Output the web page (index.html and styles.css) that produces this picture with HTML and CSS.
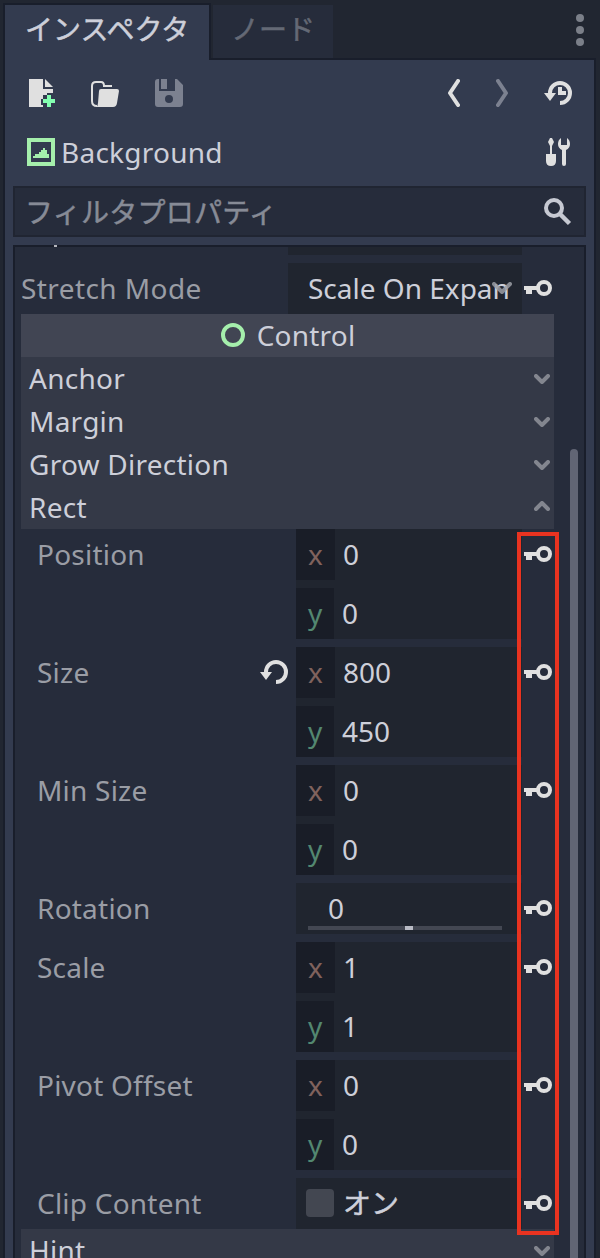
FILE: index.html
```html
<!DOCTYPE html>
<html lang="ja">
<head>
<meta charset="utf-8">
<title>インスペクタ</title>
<link rel="stylesheet" href="styles.css">
</head>
<body>
<svg class="defs" aria-hidden="true">
  <symbol id="key" viewBox="0 0 28 16"><path d="M0 6h13v4H8v4H2v-4H0z" fill="#e0e0e0"/><circle cx="20" cy="8" r="6" fill="none" stroke="#e0e0e0" stroke-width="4"/></symbol>
  <symbol id="down" viewBox="0 0 16 10"><path d="M2 2l6 6 6-6" fill="none" stroke="currentColor" stroke-width="4" stroke-linecap="round" stroke-linejoin="round"/></symbol>
  <symbol id="up" viewBox="0 0 16 10"><path d="M2 8l6-6 6 6" fill="none" stroke="currentColor" stroke-width="4" stroke-linecap="round" stroke-linejoin="round"/></symbol>
</svg>
<div class="dock">
  <header class="tabs">
    <div class="tab active">インスペクタ</div>
    <div class="tab">ノード</div>
    <svg class="dots" viewBox="0 0 8 32"><circle cx="4" cy="4" r="4"/><circle cx="4" cy="16" r="4"/><circle cx="4" cy="28" r="4"/></svg>
  </header>
  <main class="panel">
    <div class="toolbar">
      <svg class="icon" viewBox="0 0 28 28"><path d="M2 0h14v10h10v4h-6v2h-4v4h-2v6h2v2H2z" fill="#e0e0e0"/><path d="M18 0l8 8h-8z" fill="#e0e0e0"/><path d="M20 16h4v4h4v4h-4v4h-4v-4h-4v-4h4z" fill="#84ffb1"/></svg>
      <svg class="icon" viewBox="0 0 28 28"><path d="M6 27Q1 27 1 22V7Q1 3 5 3h5q3 0 3 4h8" fill="none" stroke="#e0e0e0" stroke-width="2"/><path d="M10 10h16q2 0 2 2l-2 12q-.5 4-4 4H5q2-1 2-4l1-12q0-2 2-2z" fill="#e0e0e0"/></svg>
      <svg class="icon" viewBox="0 0 28 28"><path fill-rule="evenodd" d="M3 0h1v12h16V0h2l6 6v19q0 3-3 3H3q-3 0-3-3V3Q0 0 3 0zM14 16a4 4 0 1 0 0 8a4 4 0 0 0 0-8z" fill="#7c8190"/><path d="M6 0h6v10H6z" fill="#7c8190"/></svg>
      <span class="spacer"></span>
      <svg class="arrow" viewBox="0 0 12 28"><path d="M10 2L2 14l8 12" fill="none" stroke="#e0e0e0" stroke-width="4" stroke-linecap="round" stroke-linejoin="round"/></svg>
      <svg class="arrow" viewBox="0 0 12 28"><path d="M2 2l8 12-8 12" fill="none" stroke="#7c8190" stroke-width="4" stroke-linecap="round" stroke-linejoin="round"/></svg>
      <svg class="icon" viewBox="0 0 28 28"><path d="M6 14a10 10 0 1 1 10 10" fill="none" stroke="#e0e0e0" stroke-width="4"/><path d="M0 14h12L6 22zM14 8h4v4h4v4h-8z" fill="#e0e0e0"/></svg>
    </div>
    <div class="object">
      <svg class="icon" viewBox="0 0 28 28"><path d="M2 2h24v24H2z" fill="none" stroke="#a5efac" stroke-width="4"/><path d="M6 20v-2h2v-2h4v-2h2v-2h2v-2h2v2h2v4h2v4z" fill="#a5efac"/></svg>
      <span class="name">Background</span>
      <svg class="icon" viewBox="0 0 28 28"><path d="M6 0h2l2 4-2 4v8h4v7q0 5-5 5t-5-5v-7h4V8L4 4zM17 0v7h6V0q3 2 3 6t-4 6v14q0 2-2 2t-2-2V12q-4-2-4-6t3-6z" fill="#e0e0e0"/></svg>
    </div>
    <div class="filter">
      <span>フィルタプロパティ</span>
      <svg class="icon" viewBox="0 0 28 28"><circle cx="10" cy="10" r="8" fill="none" stroke="#c6c9d2" stroke-width="4"/><path d="M15 15l10.5 10.5" stroke="#c6c9d2" stroke-width="4.5"/></svg>
    </div>
    <section class="inspector">
      <div class="list">
        <div class="cut"><i></i></div>
        <div class="row stretch"><span class="label">Stretch Mode</span><div class="field select"><span>Scale On Expan</span><svg class="chev" viewBox="0 0 20 12"><path d="M2 2l8 8 8-8" fill="none" stroke="currentColor" stroke-width="4" stroke-linecap="round" stroke-linejoin="round"/></svg></div><svg class="key"><use href="#key"/></svg></div>
        <div class="category"><svg viewBox="0 0 24 24"><circle cx="12" cy="12" r="10" fill="none" stroke="#a5efac" stroke-width="4"/></svg><span>Control</span></div>
        <div class="section"><span>Anchor</span><svg><use href="#down"/></svg></div>
        <div class="section"><span>Margin</span><svg><use href="#down"/></svg></div>
        <div class="section"><span>Grow Direction</span><svg><use href="#down"/></svg></div>
        <div class="section open"><span>Rect</span><svg><use href="#up"/></svg></div>
        <div class="props">
          <div class="row"><span class="label">Position</span><div class="field vector"><div><em class="x">x</em><span>0</span></div><div><em class="y">y</em><span>0</span></div></div><svg class="key"><use href="#key"/></svg></div>
          <div class="row"><span class="label">Size</span><svg class="reset" viewBox="0 0 28 24"><path d="M6 12a10 10 0 1 1 10 10" fill="none" stroke="#e0e0e0" stroke-width="4"/><path d="M0 12h12L6 20z" fill="#e0e0e0"/></svg><div class="field vector"><div><em class="x">x</em><span>800</span></div><div><em class="y">y</em><span>450</span></div></div><svg class="key"><use href="#key"/></svg></div>
          <div class="row"><span class="label">Min Size</span><div class="field vector"><div><em class="x">x</em><span>0</span></div><div><em class="y">y</em><span>0</span></div></div><svg class="key"><use href="#key"/></svg></div>
          <div class="row"><span class="label">Rotation</span><div class="field slider"><span>0</span><div class="track"><i></i></div></div><svg class="key"><use href="#key"/></svg></div>
          <div class="row"><span class="label">Scale</span><div class="field vector"><div><em class="x">x</em><span>1</span></div><div><em class="y">y</em><span>1</span></div></div><svg class="key"><use href="#key"/></svg></div>
          <div class="row"><span class="label">Pivot Offset</span><div class="field vector"><div><em class="x">x</em><span>0</span></div><div><em class="y">y</em><span>0</span></div></div><svg class="key"><use href="#key"/></svg></div>
          <div class="row"><span class="label">Clip Content</span><div class="field check"><i></i><span>オン</span></div><svg class="key"><use href="#key"/></svg></div>
        </div>
        <div class="section"><span>Hint</span><svg><use href="#down"/></svg></div>
      </div>
      <div class="scrollbar"></div>
    </section>
  </main>
</div>
<div class="highlight"></div>
</body>
</html>
```
FILE: styles.css
```css
* { box-sizing: border-box; }
body {
  margin: 0;
  width: 600px;
  height: 1258px;
  overflow: hidden;
  position: relative;
  background: #212631;
  color: #cdcfd9;
  font: 28px/38px "Noto Sans", "Noto Sans CJK JP", sans-serif;
  font-variant-ligatures: none;
}
svg { display: block; flex: none; }
.defs { position: absolute; width: 0; height: 0; }
.dock { height: 1258px; padding: 3px 4px 0 3px; display: flex; flex-direction: column; }

.tabs { height: 55px; display: flex; flex: none; }
.tab {
  margin: 2px 0 0 2px;
  width: 120px;
  height: 55px;
  padding: 5px 0 0 18px;
  background: #262c3b;
  color: #646975;
  white-space: nowrap;
  -webkit-text-stroke: .5px;
}
.tab.active {
  position: relative;
  margin: 0;
  width: 208px;
  height: 57px;
  padding: 5px 0 0 20px;
  border: 2px solid #191e2b;
  border-bottom: 0;
  background: #333b4f;
  color: #cdcfd9;
}
.dots { width: 8px; height: 32px; margin: 11px 12px 0 auto; fill: #7b7f89; }

.panel {
  flex: 1;
  min-height: 0;
  display: flex;
  flex-direction: column;
  padding: 0 8px;
  background: #333b4f;
  border: 2px solid #191e2b;
  border-bottom: 0;
}
.icon { width: 28px; height: 28px; }
.toolbar { display: flex; height: 66px; flex: none; align-items: center; padding: 0 14px; gap: 36px; }
.spacer { flex: 1; }
.arrow { width: 12px; height: 28px; }
.object { height: 52px; flex: none; display: flex; align-items: center; padding: 0 14px; gap: 6px; }
.name { flex: 1; letter-spacing: .25px; }
.filter {
  height: 51px;
  flex: none;
  margin: 8px 0;
  padding: 0 12px 0 10px;
  display: flex;
  align-items: center;
  justify-content: space-between;
  border: 2px solid #202532;
  background: #262c3b;
  color: #878b96;
}
.filter span { letter-spacing: .25px; -webkit-text-stroke: .5px; }
.inspector {
  flex: 1;
  min-height: 0;
  display: flex;
  border: 2px solid #191e2b;
  border-bottom: 0;
  background: #262c3b;
}
.list { width: 533px; margin-left: 6px; }
.cut { height: 8px; margin: 0 32px 8px 267px; background: #20252f; display: flex; }
.cut i { width: 3px; height: 2px; margin: -2px 0 0 -234px; background: #b4b6bd; }

.row { display: flex; align-items: flex-start; margin-bottom: 8px; }
.row.stretch { margin: 0; }
.label { flex: 1; padding-top: 6px; color: #9a9da5; white-space: nowrap; letter-spacing: .22px; }
.stretch .label { letter-spacing: .42px; }
.field { width: 226px; background: #20252f; flex: none; }
.key { width: 28px; height: 16px; margin: 17px 2px 0; }
.select { width: 234px; height: 51px; padding: 6px 0 0 20px; display: flex; }
.select span { width: 204px; white-space: nowrap; flex: none; }
.chev { width: 20px; height: 12px; margin: 13px 0 0 -20px; color: #9b9da5; opacity: .85; }

.category {
  height: 43px;
  display: flex;
  justify-content: center;
  gap: 12px;
  padding-left: 1px;
  background: #414553;
}
.category span { padding-top: 2px; letter-spacing: .2px; }
.category svg { width: 24px; height: 24px; margin-top: 9px; }
.section {
  height: 43px;
  display: flex;
  justify-content: space-between;
  padding: 2px 4px 0 8px;
  background: #343947;
  letter-spacing: .25px;
}
.section svg { width: 16px; height: 10px; margin-top: 15px; color: #83868f; }
.section.open svg { margin-top: 13px; }

.props { padding-left: 16px; }
.props .row:last-child { margin-bottom: 0; }
.reset { width: 28px; height: 24px; margin: 13px 8px 0 0; }
.vector { display: grid; gap: 8px; }
.vector div { height: 51px; display: flex; }
.vector em {
  width: 39px;
  height: 51px;
  padding: 6px 0 0 12px;
  margin-right: 8px;
  background: #191d27;
  font-style: normal;
}
.vector em.y { width: 38px; }
.vector span { padding-top: 6px; }
.x { color: #80625d; }
.y { color: #538770; }
.slider { height: 51px; padding: 6px 20px 0 12px; }
.slider span { display: block; height: 37px; padding-left: 20px; }
.track { height: 4px; background: #434752; display: flex; justify-content: center; }
.track i { width: 8px; height: 4px; margin-left: 8px; background: #b9bbc5; }
.check { height: 51px; padding: 6px 0 0 10px; display: flex; gap: 9px; }
.check i { width: 28px; height: 28px; margin-top: 5px; border-radius: 4px; background: #434751; }
.check span { -webkit-text-stroke: .5px; }

.scrollbar { width: 8px; margin: 202px 0 0 16px; border-radius: 4px 4px 0 0; background: #616574; }
.highlight {
  position: absolute;
  left: 517px;
  top: 532px;
  width: 42px;
  height: 703px;
  border: 4px solid #e93320;
}
```
